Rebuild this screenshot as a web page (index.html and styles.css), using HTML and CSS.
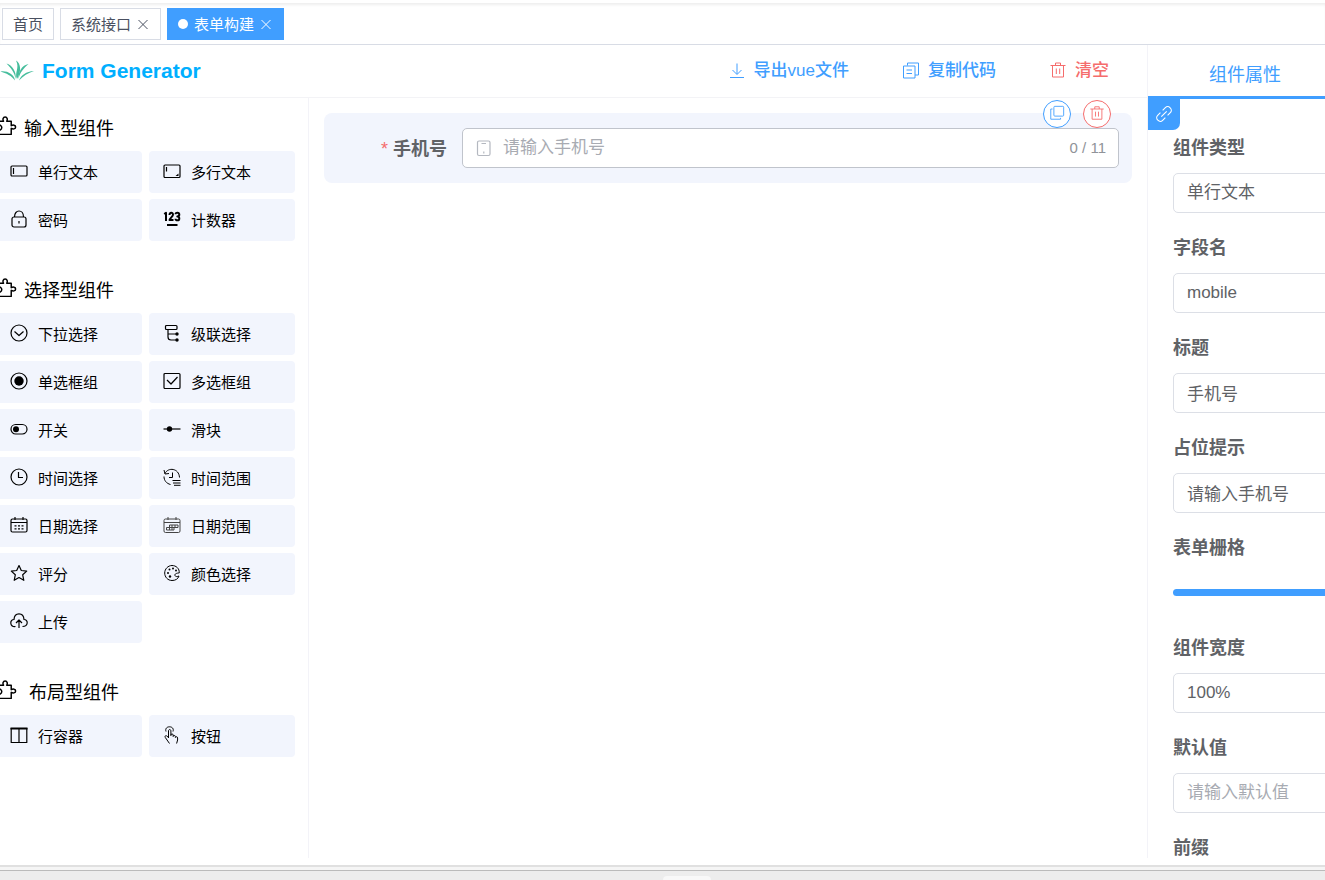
FILE: index.html
```html
<!DOCTYPE html>
<html lang="zh-CN">
<head>
    <meta charset="UTF-8">
    <meta name="viewport" content="width=device-width, initial-scale=1.0">
    <title>Form Generator</title>
    <link rel="stylesheet" href="styles.css">
</head>
<body>
    <!-- Shared icons -->
    <svg class="sprite" aria-hidden="true">
        <symbol id="i-close" viewBox="0 0 14 14"><path d="M2.500 3l9 9M11.500 3l-9 9"/></symbol>
        <symbol id="i-puzzle" viewBox="0 0 20 20"><path d="M2 5h5.200c-1-1.500-.6-4 1.500-4s2.500 2.500 1.500 4H14.500v4.200c1.500-.9 4.200-.8 4.200 1.300s-2.700 2.200-4.200 1.300V17.500H1.500v-4.300c2 .8 4-.2 4-2.200s-2-3-4-2.200z"/></symbol>
        <symbol id="i-trash" viewBox="0 0 18 18"><path d="M1.500 4.500h15M3.500 4.500v11.500h11V4.500M6.500 4.500V2h5v2.500M7.300 7.500v5.500M10.700 7.500v5.500"/></symbol>
    </svg>

    <nav class="tags">
        <a class="tag" href="#">首页</a>
        <a class="tag" href="#">系统接口<svg class="close"><use href="#i-close"/></svg></a>
        <a class="tag active" href="#"><span class="dot"></span>表单构建<svg class="close"><use href="#i-close"/></svg></a>
    </nav>

    <main class="generator">
        <div class="workspace">
            <header class="header">
                <h1 class="logo">
                    <svg viewBox="0 0 34 24">
                        <path d="M17 20C14 14 20 9 16 1.500c5 3 5.500 11 1 18.500z"/>
                        <path d="M15.500 20C15 14 11 9 6.500 4.500 12 6 17 13 15.500 20z"/>
                        <path d="M18.500 20C18 13 22 6 28.500 5 24 9 20 13 18.500 20z"/>
                        <path d="M15 21.500C12 17 6 14 .5 12.500 7 11.500 14 15 15 21.500z"/>
                        <path d="M19 21.500C21 16 26 12.500 34 12c-6 2-11 5-15 9.500z"/>
                    </svg>
                    Form Generator
                </h1>
                <div class="actions">
                    <button class="action"><svg viewBox="0 0 18 18"><path d="M9 2.500v10.500M4.500 9L9 13.500 13.500 9M2 16.500h14"/></svg>导出vue文件</button>
                    <button class="action"><svg viewBox="0 0 18 18"><path d="M5.500 4.500V2h11v12H13M1.500 5H13v12H1.500zM4.500 9H10M4.500 12.500H10"/></svg>复制代码</button>
                    <button class="action danger"><svg><use href="#i-trash"/></svg>清空</button>
                </div>
            </header>

            <div class="columns">
                <!-- Component list -->
                <aside class="components">
                    <section class="group">
                        <h2 class="group-title"><svg><use href="#i-puzzle"/></svg>输入型组件</h2>
                        <div class="tiles">
                            <button class="tile"><svg viewBox="0 0 18 18"><rect x="1" y="4" width="16" height="10" rx="1"/><path d="M3.500 6v6"/></svg>单行文本</button>
                            <button class="tile"><svg viewBox="0 0 18 18"><rect x="1" y="3" width="16" height="12.500" rx="1"/><path d="M3.500 5v4.500"/><path class="solid" d="M15.500 11.500V14H12.500z"/></svg>多行文本</button>
                            <button class="tile"><svg viewBox="0 0 18 18"><rect x="2" y="7" width="14" height="10" rx="2"/><path d="M4.500 7c0-8 9-8 9 0M9 11v2.500"/></svg>密码</button>
                            <button class="tile"><svg viewBox="0 0 18 18"><path class="bold" d="M1.200 4L3 2.800V11M6.500 5C6.500 2 10 2 10 4.700 10 6.500 6.500 8.500 6.500 10h4M12.500 4.300c0-2.200 3.800-2.200 3.800.3 0 1.600-1.300 1.800-2 1.800.7 0 2 .2 2 2 0 2.600-3.800 2.500-3.800.4M4 15h10.500"/></svg>计数器</button>
                        </div>
                    </section>

                    <section class="group">
                        <h2 class="group-title"><svg><use href="#i-puzzle"/></svg>选择型组件</h2>
                        <div class="tiles">
                            <button class="tile"><svg viewBox="0 0 18 18"><circle cx="9" cy="9" r="8"/><path d="M4.500 7.500L9 11.500l4.500-4"/></svg>下拉选择</button>
                            <button class="tile"><svg viewBox="0 0 18 18"><rect x="2.500" y="1.500" width="11.500" height="4" rx="1"/><path d="M5 5.500V13c0 2 1 3 3 3h5.500M5 10h8.500"/><circle class="solid" cx="14" cy="10" r="1.700"/><circle class="solid" cx="14" cy="16" r="1.700"/></svg>级联选择</button>
                            <button class="tile"><svg viewBox="0 0 18 18"><circle cx="9" cy="9" r="8"/><circle class="solid" cx="9" cy="9" r="4.700"/></svg>单选框组</button>
                            <button class="tile"><svg viewBox="0 0 18 18"><rect x="1" y="1.500" width="16" height="15" rx="1"/><path d="M4 8l4 4 6.500-7"/></svg>多选框组</button>
                            <button class="tile"><svg viewBox="0 0 18 18"><rect x="1" y="4.500" width="16" height="9.500" rx="4.700"/><circle class="solid" cx="6" cy="9.200" r="3"/></svg>开关</button>
                            <button class="tile"><svg viewBox="0 0 18 18"><path d="M.5 9h17"/><circle class="solid" cx="6.500" cy="9" r="2.700"/></svg>滑块</button>
                            <button class="tile"><svg viewBox="0 0 18 18"><circle cx="9" cy="9" r="8"/><path d="M8.500 4v5.500H13"/></svg>时间选择</button>
                            <button class="tile"><svg class="thin" viewBox="0 0 18 18"><path d="M2 5.500C5-1 16 0 16.500 9.500M1 2l1 4 4-.5M1 8.500c0 4 2.500 7 6.500 8M9.500 4.500v5H6M9.500 12.500h8M10 15h7.500M11 17.300h6.500"/></svg>时间范围</button>
                            <button class="tile"><svg viewBox="0 0 18 18"><rect x="1" y="3" width="16" height="13" rx="1.500"/><path d="M1 6.500h16M5 1v3M13 1v3M4.500 9.800h2M8 9.800h2M11.500 9.800h2M4.500 12.800h2M8 12.800h2M11.500 12.800h2"/></svg>日期选择</button>
                            <button class="tile"><svg class="light" viewBox="0 0 18 18"><rect x="1" y="3" width="16" height="13.500" rx="1.500"/><path d="M1 6.500h16M5 1v3M13 1v3M6.500 9H15v2.500H6.500zM3.500 11.500h7.500V14H3.500zM9 9v5M12 9v2.500M6.500 11v3"/></svg>日期范围</button>
                            <button class="tile"><svg viewBox="0 0 18 18"><path d="M9 1.500l2.300 5 5.400.6-4 3.700 1.100 5.500L9 13.600l-4.800 2.700 1.100-5.500-4-3.700 5.400-.6z"/></svg>评分</button>
                            <button class="tile"><svg class="thin" viewBox="0 0 18 18"><path d="M16.200 9C16.700 4.500 13 1.500 9 1.500S1.700 5 1.700 9s3 7.500 7.300 7.500c3.500 0 6-1.500 7-4.500-1.700.8-3.500.8-4-.4-.7-1.700 1.700-2.600 4.200-2.600z"/><circle class="solid" cx="5" cy="9" r="1"/><circle class="solid" cx="6.500" cy="5.500" r="1"/><circle class="solid" cx="10" cy="4.500" r="1"/><circle class="solid" cx="13" cy="6.500" r="1"/><circle class="solid" cx="7" cy="12.500" r="1.200"/></svg>颜色选择</button>
                            <button class="tile"><svg viewBox="0 0 18 18"><path d="M5.500 14.500C-.5 15-.5 7.500 4 7.500 4.500 0 13.500 0 14 7.500c4.500 0 4.500 7-1.500 7M9 16V8.500M6 11l3-3 3 3"/></svg>上传</button>
                        </div>
                    </section>

                    <section class="group">
                        <h2 class="group-title wide"><svg><use href="#i-puzzle"/></svg>布局型组件</h2>
                        <div class="tiles">
                            <button class="tile"><svg viewBox="0 0 18 18"><path d="M1.200 2v14.500h15.600V2M9 2.500v14"/><path class="bold" d="M.5 2.500h17"/></svg>行容器</button>
                            <button class="tile"><svg class="thin" viewBox="0 0 18 18"><path d="M3 5.500C2 2.500 4 .8 6.500.8s4.500 1.700 3.500 4.700M5.500 12V5c0-2 2.400-2 2.400 0v5M7.900 9c0-1.500 2.300-1.300 2.300 0v1.500c0-1.400 2.200-1.300 2.200 0v1c.3-1.200 2.200-1 2.200.5V14l-1 3.500M5.500 11.500l-2-1.700c-1.200-.5-2 .8-1.200 1.700l4.200 6"/></svg>按钮</button>
                        </div>
                    </section>
                </aside>

                <!-- Drawing board -->
                <section class="board">
                    <div class="form-item">
                        <label class="form-label" for="mobile">手机号</label>
                        <div class="field">
                            <svg viewBox="0 0 18 18"><rect x="2.500" y="2" width="12.500" height="14.500" rx="1.500"/><path d="M6.500 4.500h4.500M8.800 12.500v2"/></svg>
                            <input id="mobile" type="text" maxlength="11" placeholder="请输入手机号">
                            <span class="count">0 / 11</span>
                        </div>
                        <div class="tools">
                            <button class="tool" aria-label="复制"><svg viewBox="0 0 18 18"><rect x="5.500" y="1.500" width="11" height="11" rx="1"/><path d="M4 4.500H2v11.500h11v-1.500"/></svg></button>
                            <button class="tool danger" aria-label="删除"><svg><use href="#i-trash"/></svg></button>
                        </div>
                    </div>
                </section>
            </div>
        </div>

        <!-- Properties of the selected component -->
        <aside class="props">
            <div class="props-tabs"><button class="props-tab">组件属性</button></div>
            <a class="doc-link" href="#" aria-label="组件文档"><svg viewBox="0 0 20 20"><path d="M8.500 6l3-3c3.500-3.500 9 2 5.500 5.500l-3 3M11.500 14l-3 3C5 20.500-.5 15 3 11.500l3-3M7 13l6-6"/></svg></a>
            <form class="props-form">
                <div class="prop"><label for="p-type">组件类型</label><select id="p-type"><option>单行文本</option></select></div>
                <div class="prop"><label for="p-name">字段名</label><input id="p-name" type="text" value="mobile"></div>
                <div class="prop"><label for="p-title">标题</label><input id="p-title" type="text" value="手机号"></div>
                <div class="prop"><label for="p-hint">占位提示</label><input id="p-hint" type="text" value="请输入手机号"></div>
                <div class="prop"><label for="p-span">表单栅格</label><input id="p-span" type="range" min="1" max="24" value="24"></div>
                <div class="prop"><label for="p-width">组件宽度</label><input id="p-width" type="text" value="100%"></div>
                <div class="prop"><label for="p-default">默认值</label><input id="p-default" type="text" placeholder="请输入默认值"></div>
                <div class="prop"><label for="p-prefix">前缀</label><input id="p-prefix" type="text"></div>
            </form>
        </aside>
    </main>

    <footer class="dock"><span class="dock-handle"></span></footer>
</body>
</html>
```
FILE: styles.css
```css
* {
    box-sizing: border-box;
}

body {
    display: flex;
    flex-direction: column;
    height: 100vh;
    margin: 0;
    overflow: hidden;
    background-color: #fff;
    color: #000;
    font-family: "Liberation Sans", "Noto Sans CJK SC", sans-serif;
    font-size: 15px;
}

button, input, select {
    font: inherit;
    color: inherit;
}

button {
    padding: 0;
    border: none;
    background: none;
    cursor: pointer;
}

svg {
    flex: none;
    width: 18px;
    height: 18px;
    fill: none;
    stroke: currentColor;
    stroke-width: 1.2;
    stroke-linejoin: round;
}

svg .solid {
    fill: currentColor;
    stroke: none;
}

svg .bold {
    stroke-width: 2;
}

svg.thin {
    stroke-width: 1;
}

svg.light {
    stroke-width: 1;
    color: #444;
}

.sprite {
    display: none;
}

/* Opened pages */
.tags {
    display: flex;
    flex: none;
    gap: 6px;
    padding: 5px 2px 4px;
    border-top: 3px solid #fff;
    border-bottom: 1px solid #d8dce5;
    box-shadow: inset 0 3px 3px -1px #eee;
}

.tag {
    display: flex;
    align-items: center;
    height: 32px;
    padding: 0 10px 2px;
    border: 1px solid #d8dce5;
    color: #495060;
    text-decoration: none;
}

.tag.active {
    border-color: #409eff;
    background-color: #409eff;
    color: #fff;
}

.dot {
    width: 10px;
    height: 10px;
    margin-top: 2px;
    margin-right: 6px;
    border-radius: 50%;
    background-color: #fff;
}

.close {
    width: 14px;
    height: 14px;
    margin-top: 2px;
    margin-left: 5px;
    stroke-width: 1;
}

.generator {
    display: flex;
    flex: 1;
    min-height: 0;
    padding-bottom: 7px;
}

.workspace {
    display: flex;
    flex: 1;
    flex-direction: column;
    min-width: 0;
}

/* Logo and actions */
.header {
    display: flex;
    flex: none;
    align-items: center;
    justify-content: space-between;
    height: 53px;
    padding-right: 38px;
    border-bottom: 1px solid #f3f3f6;
}

.logo {
    display: flex;
    align-items: center;
    gap: 8px;
    margin: 0;
    color: #00afff;
    font-size: 21px;
}

.logo svg {
    width: 34px;
    height: 24px;
    fill: #45bd9c;
    stroke: none;
}

.actions {
    display: flex;
    gap: 53px;
    padding-bottom: 5px;
}

.action {
    display: flex;
    align-items: center;
    gap: 8px;
    color: #409eff;
    font-size: 17px;
    font-weight: 500;
}

.action svg {
    margin-top: 2px;
    stroke-width: 1;
}

.danger {
    color: #f56c6c;
}

.columns {
    display: flex;
    flex: 1;
    min-height: 0;
}

/* Component list */
.components {
    flex: none;
    width: 309px;
    padding: 7px 13px 0 0;
    border-right: 1px solid #f3f3f8;
    overflow: hidden;
}

.group {
    margin: 0 0 26px -4px;
}

.group-title {
    display: flex;
    align-items: center;
    gap: 7px;
    height: 46px;
    margin: 0;
    padding-bottom: 2px;
    font-size: 18px;
    font-weight: 400;
}

.group-title.wide {
    gap: 12px;
}

.group-title svg {
    width: 21px;
    height: 21px;
    margin-bottom: 2px;
    stroke-width: 1.4;
}

.tiles {
    display: grid;
    grid-template-columns: 1fr 1fr;
    gap: 6px 7px;
}

.tile {
    display: flex;
    align-items: center;
    gap: 10px;
    height: 42px;
    padding: 0 0 2px 14px;
    border-radius: 4px;
    background-color: #f2f5fd;
}

/* Drawing board */
.board {
    flex: 1;
    min-width: 0;
    padding: 15px;
}

.form-item {
    position: relative;
    display: flex;
    align-items: center;
    gap: 15px;
    padding: 15px 13px;
    border-radius: 8px;
    background-color: #f2f5fd;
}

.form-label {
    width: 110px;
    padding-bottom: 3px;
    color: #606266;
    font-size: 18px;
    font-weight: 700;
    text-align: right;
}

.form-label::before {
    content: "*";
    margin-right: 5px;
    color: #f56c6c;
    font-weight: 400;
}

.field {
    display: flex;
    flex: 1;
    align-items: center;
    gap: 10px;
    min-width: 0;
    height: 40px;
    padding: 0 12px;
    border: 1px solid #c0c4cc;
    border-radius: 5px;
    background-color: #fff;
    color: #b4b8c0;
}

.field input {
    flex: 1;
    min-width: 0;
    padding: 0;
    border: none;
    outline: none;
    color: #606266;
    font-size: 17px;
}

.count {
    padding-bottom: 2px;
    color: #909399;
}

::placeholder {
    color: #a8abb2;
}

.tools {
    position: absolute;
    top: -13px;
    right: 21px;
    display: flex;
    gap: 12px;
}

.tool {
    display: flex;
    align-items: center;
    justify-content: center;
    width: 28px;
    height: 28px;
    padding-bottom: 2px;
    border: 1px solid currentColor;
    border-radius: 50%;
    background-color: #fff;
    color: #409eff;
}

.tool.danger {
    color: #f56c6c;
}

.tool svg {
    width: 16px;
    height: 16px;
    stroke-width: 1;
}

/* Properties */
.props {
    position: relative;
    flex: none;
    width: 178px;
    border-left: 1px solid #f3f3f8;
    overflow: hidden;
}

.props-tabs {
    height: 54px;
    border-bottom: 3px solid #409eff;
}

.props-tab {
    width: 194px;
    height: 100%;
    padding-top: 5px;
    color: #409eff;
    font-size: 18px;
}

.doc-link {
    position: absolute;
    top: 53px;
    left: 0;
    display: flex;
    align-items: center;
    justify-content: center;
    width: 32px;
    height: 32px;
    border-radius: 0 0 7px 0;
    background-color: #409eff;
    color: #fff;
}

/* The form is wider than the visible part of the panel */
.props-form {
    width: 390px;
    padding: 24px 25px 0;
    color: #606266;
    font-size: 17px;
}

.prop {
    height: 100px;
}

.prop label {
    display: block;
    font-size: 18px;
    font-weight: 700;
    line-height: 50px;
}

.prop input, .prop select {
    display: block;
    width: 100%;
    height: 40px;
    margin: 0;
    padding: 0 13px 1px;
    border: 1px solid #dcdfe6;
    border-radius: 5px;
    background-color: #fff;
    appearance: none;
}

.prop input[type="range"] {
    height: 7px;
    margin-top: 16px;
    padding: 0;
    border: none;
    border-radius: 4px;
    background-color: #409eff;
}

/* Bottom edge of the window */
.dock {
    display: flex;
    flex: none;
    justify-content: center;
    height: 15px;
    padding: 9px 0 0 48px;
    border-top: 2px solid #e0e0e0;
    background: linear-gradient(#f5f5f5 3px, #bbb 3px, #bbb 4px, #ededed 4px);
}

.dock-handle {
    width: 48px;
    border-radius: 4px 4px 0 0;
    background-color: #f8f8f8;
}
```
